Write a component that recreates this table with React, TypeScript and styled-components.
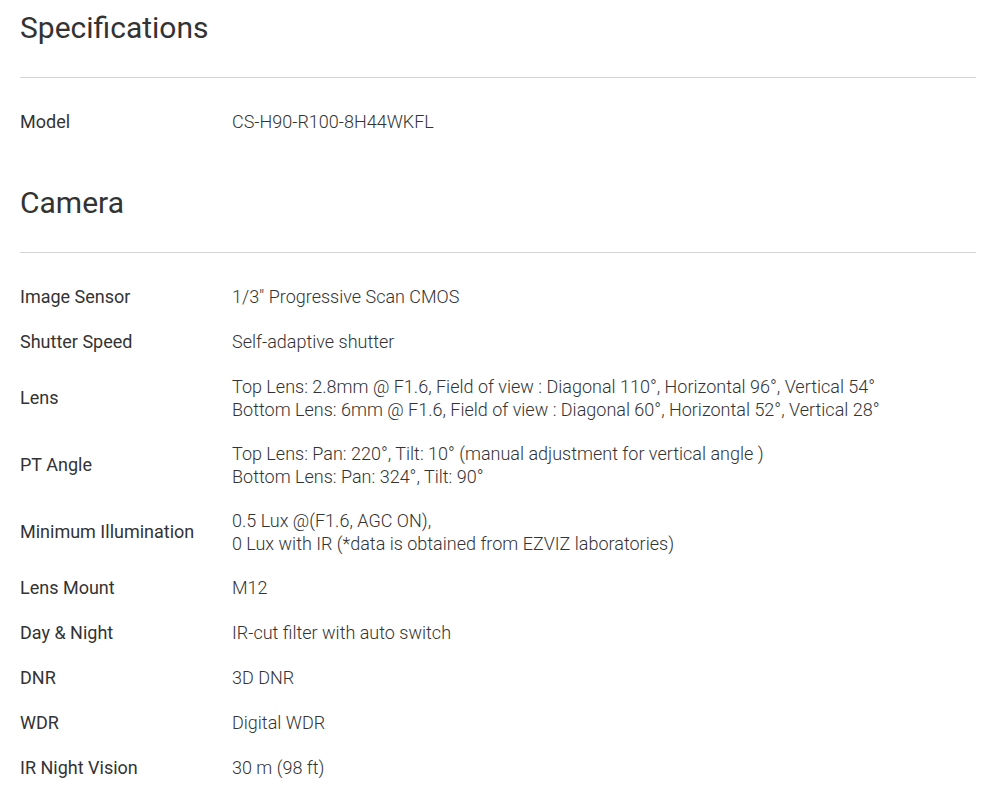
import React from "react";
import styled, { createGlobalStyle } from "styled-components";

const Global = createGlobalStyle`
  html, body { margin: 0; padding: 0; background: #fff; }
  body { font-family: Roboto, "Liberation Sans", Arial, sans-serif; color: #333; }
  *, *::before, *::after { box-sizing: border-box; }
`;

const Page = styled.div`
  width: 100%;
  padding: 0 28px 0 20px;
`;

const Section = styled.section`
  display: flex;
  flex-direction: column;
`;

const Title = styled.h2`
  margin: 0;
  padding: 9px 0 30px;
  font-size: 30px;
  font-weight: 400;
  line-height: 38px;
  color: #333;
  border-bottom: 1px solid #d4d4d4;
`;

const Table = styled.div`
  display: flex;
  flex-direction: column;
  padding: 21px 0 31px;
`;

const Row = styled.div`
  display: grid;
  grid-template-columns: 212px 1fr;
  align-items: center;
  min-height: 45px;
  padding: 10.5px 0;
  font-size: 18px;
  line-height: 23px;
`;

const Label = styled.div`
  font-weight: 400;
  color: #333;
`;

const Value = styled.div`
  font-weight: 300;
  color: #333;
`;

type Spec = { label: string; value: string[] };

const general: Spec[] = [{ label: "Model", value: ["CS-H90-R100-8H44WKFL"] }];

const camera: Spec[] = [
  { label: "Image Sensor", value: ['1/3" Progressive Scan CMOS'] },
  { label: "Shutter Speed", value: ["Self-adaptive shutter"] },
  {
    label: "Lens",
    value: [
      "Top Lens: 2.8mm @ F1.6, Field of view : Diagonal 110°, Horizontal 96°, Vertical 54°",
      "Bottom Lens: 6mm @ F1.6, Field of view : Diagonal 60°, Horizontal 52°, Vertical 28°",
    ],
  },
  {
    label: "PT Angle",
    value: [
      "Top Lens: Pan: 220°, Tilt: 10° (manual adjustment for vertical angle )",
      "Bottom Lens: Pan: 324°, Tilt: 90°",
    ],
  },
  {
    label: "Minimum Illumination",
    value: ["0.5 Lux @(F1.6, AGC ON),", "0 Lux with IR (*data is obtained from EZVIZ laboratories)"],
  },
  { label: "Lens Mount", value: ["M12"] },
  { label: "Day & Night", value: ["IR-cut filter with auto switch"] },
  { label: "DNR", value: ["3D DNR"] },
  { label: "WDR", value: ["Digital WDR"] },
  { label: "IR Night Vision", value: ["30 m (98 ft)"] },
];

const SpecSection = ({ title, rows }: { title: string; rows: Spec[] }) => (
  <Section>
    <Title>{title}</Title>
    <Table>
      {rows.map((r) => (
        <Row key={r.label}>
          <Label>{r.label}</Label>
          <Value>
            {r.value.map((v, i) => (
              <div key={i}>{v}</div>
            ))}
          </Value>
        </Row>
      ))}
    </Table>
  </Section>
);

export default function App() {
  return (
    <Page>
      <Global />
      <SpecSection title="Specifications" rows={general} />
      <SpecSection title="Camera" rows={camera} />
    </Page>
  );
}
